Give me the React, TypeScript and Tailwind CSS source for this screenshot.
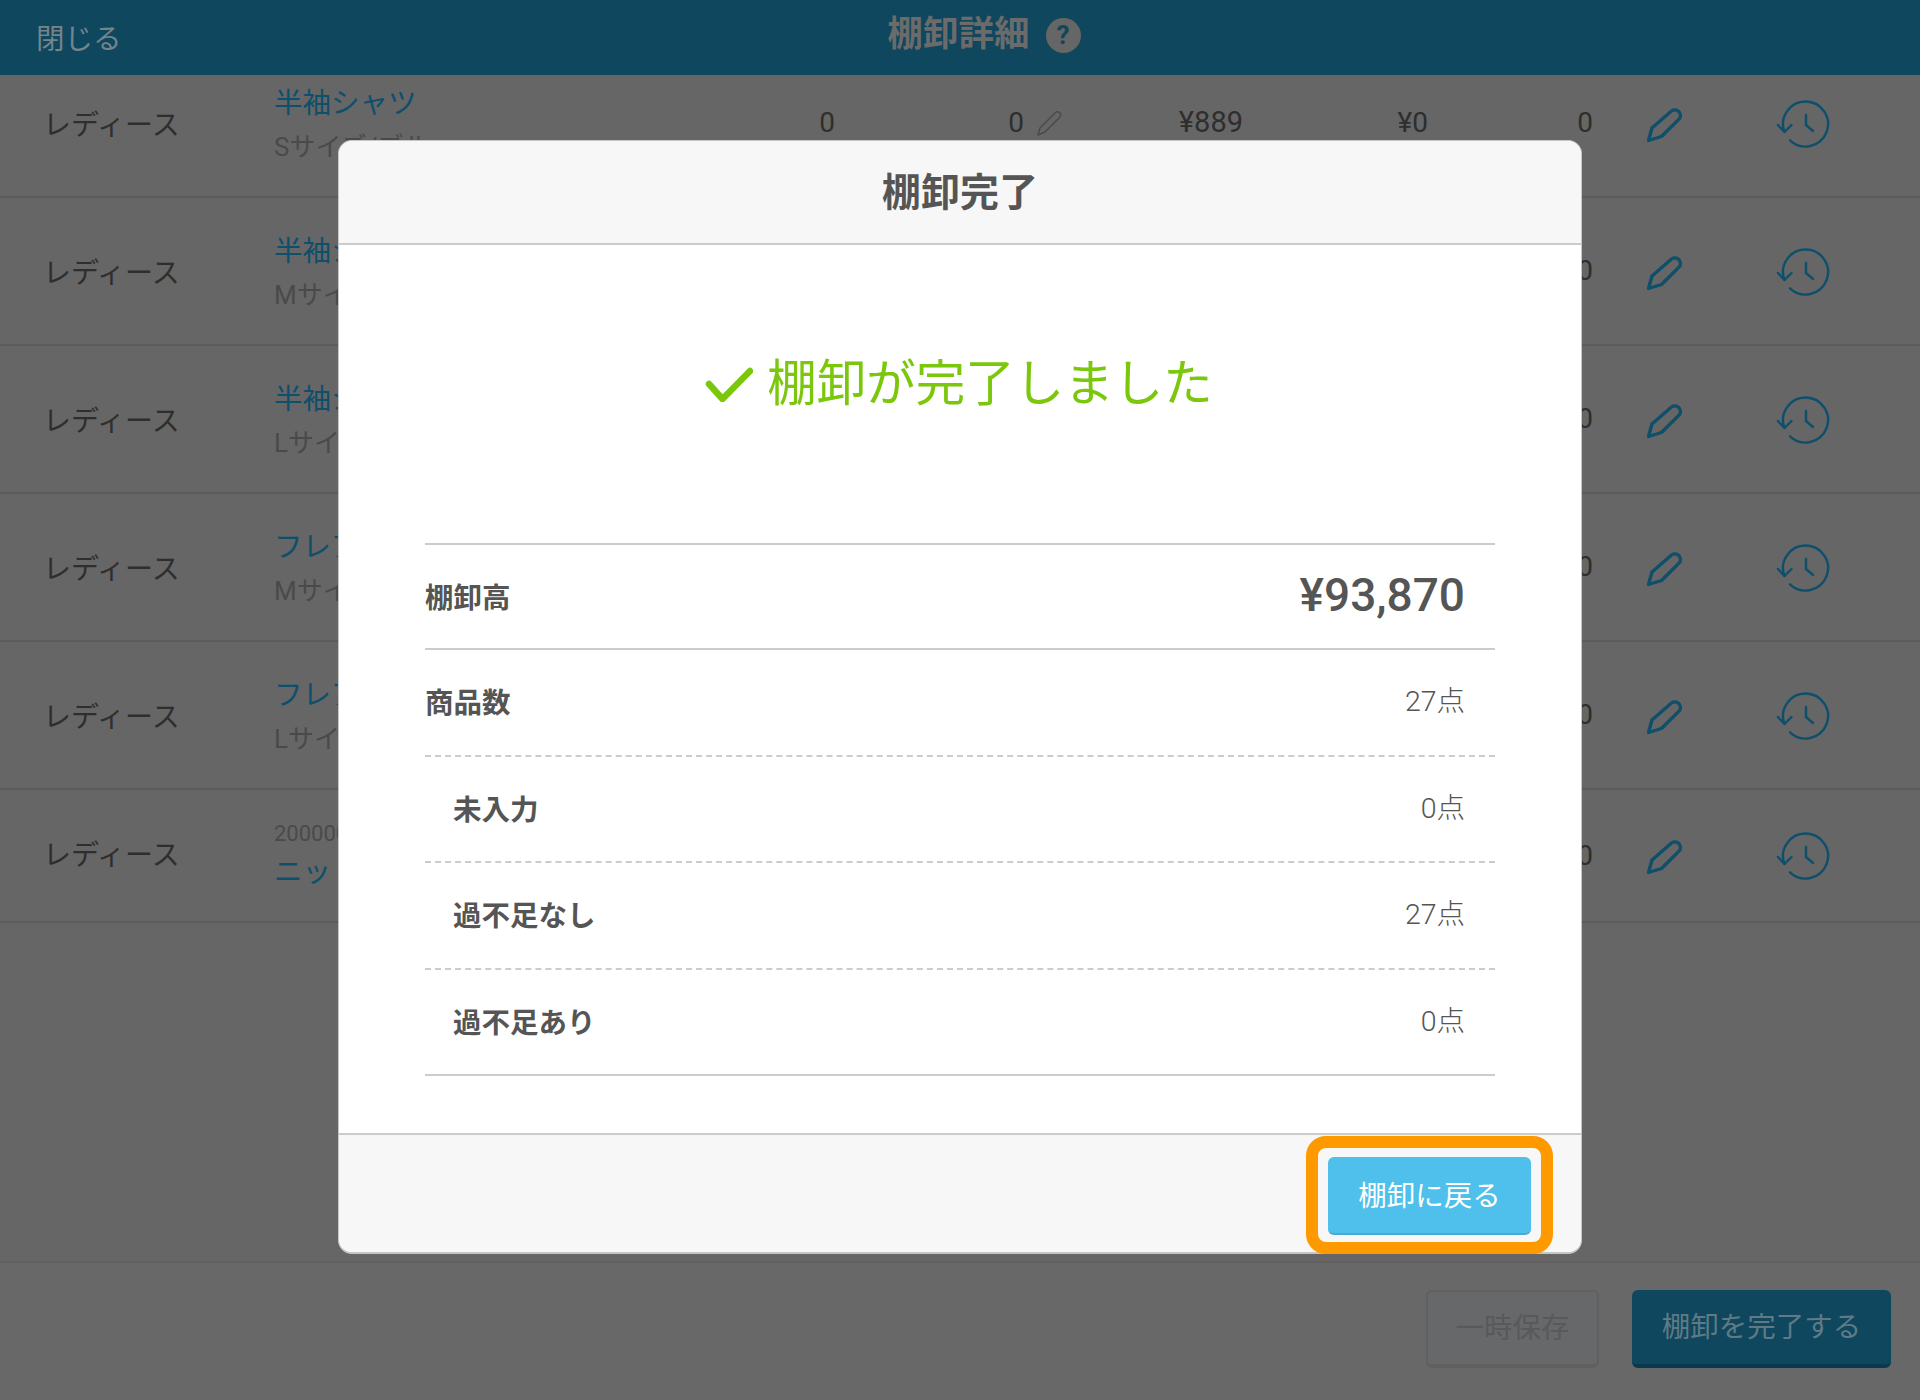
const rows = [
  { name: "半袖シャツ", sub: "Sサイズ/ブルー", first: true },
  { name: "半袖シャツ", sub: "Mサイズ/ブルー" },
  { name: "半袖シャツ", sub: "Lサイズ/ブルー" },
  { name: "フレアスカート", sub: "Mサイズ/ネイビー" },
  { name: "フレアスカート", sub: "Lサイズ/ネイビー" },
];

const summary = [
  { label: "商品数", value: "27点", indent: false, line: "border-dashed" },
  { label: "未入力", value: "0点", indent: true, line: "border-dashed" },
  { label: "過不足なし", value: "27点", indent: true, line: "border-dashed" },
  { label: "過不足あり", value: "0点", indent: true, line: "border-solid" },
];

const PencilIcon = () => (
  <svg width="36" height="36" viewBox="0 0 36 36" fill="none" stroke="#0e4f6c" strokeWidth="3.4" strokeLinejoin="round">
    <path d="M1.5 33.5l3.5-12.5L24.5 4a5.6 5.6 0 0 1 8 7.6L14.5 29.5z" />
  </svg>
);

const HistoryIcon = () => (
  <svg width="54" height="48" viewBox="0 0 54 48" fill="none" stroke="#0e4f6c" strokeWidth="2.4" strokeLinecap="round" strokeLinejoin="round">
    <path d="M8.5 32A22.5 22.5 0 1 1 14 40.3" />
    <path d="M2 25l6.5 7 7-7" />
    <path d="M30 15v10l7 6" />
  </svg>
);

const Row = ({ name, sub, first }: { name: string; sub: string; first?: boolean }) => (
  <div className={`grid h-[148px] grid-cols-[274px_480px_81px_189px_220px_186px_163px_144px_136px] items-center border-b-2 border-[#5c5c5c] text-[28px] text-[#2e2e2e] ${first ? "-mt-[25px]" : ""}`}>
    <div className="pl-[43px] pt-[5px]">レディース</div>
    <div className="pt-[5px]">
      <div className="text-[28.5px] leading-[40px] text-[#0e4f6c]">{name}</div>
      <div className="mt-[3px] text-[26px] leading-[40px] text-[#4a4a4a]">{sub}</div>
    </div>
    <div className="text-right">0</div>
    <div className="text-right">0</div>
    <div className="flex items-center justify-between pl-[12px] pr-[1px] text-[29px]">
      <svg width="28" height="28" viewBox="0 0 28 28" fill="none" stroke="#4a4a4a" strokeWidth="1.5" strokeLinejoin="round">
        <path d="M2 26l2-7L19 4a3 3 0 0 1 5 4L9 23z" />
      </svg>
      <span>¥889</span>
    </div>
    <div className="pr-[2px] text-right">¥0</div>
    <div className="text-right">0</div>
    <div className="flex justify-center pt-[4px]"><PencilIcon /></div>
    <div className="flex justify-center pr-[4px] pt-[2px]"><HistoryIcon /></div>
  </div>
);

export default function App() {
  return (
    <div className="relative flex h-[1400px] w-[1920px] flex-col overflow-hidden bg-[#666666] font-['Roboto','Noto_Sans_CJK_JP',sans-serif]">
      <header className="relative flex h-[75px] shrink-0 items-center bg-[#0e475e] pl-[36px]">
        <span className="mt-[6px] text-[28.5px] text-[#74848b]">閉じる</span>
        <div className="absolute inset-x-0 top-0 flex h-[70px] items-center justify-center gap-[16px] pl-[48px]">
          <span className="text-[35.5px] font-bold text-[#6b6b6b]">棚卸詳細</span>
          <span className="flex h-[35px] w-[35px] items-center justify-center rounded-full bg-[#666666] text-[26px] font-bold text-[#0e475e]">?</span>
        </div>
      </header>

      <main className="flex-1 overflow-hidden">
        {rows.map((r, i) => (
          <Row key={i} name={r.name} sub={r.sub} first={r.first} />
        ))}
        <div className="grid h-[133px] grid-cols-[274px_480px_81px_189px_220px_186px_163px_144px_136px] items-center border-b-2 border-[#5c5c5c] text-[28px] text-[#2e2e2e]">
          <div className="pl-[43px] pt-[1px]">レディース</div>
          <div>
            <div className="text-[22px] leading-[30px] text-[#4a4a4a]">20000000012</div>
            <div className="mt-[4px] text-[28.5px] leading-[40px] text-[#0e4f6c]">ニットカーディガン</div>
          </div>
          <div />
          <div />
          <div />
          <div />
          <div className="text-right">0</div>
          <div className="flex justify-center pt-[3px]"><PencilIcon /></div>
          <div className="flex justify-center pr-[4px] pt-[1px]"><HistoryIcon /></div>
        </div>
      </main>

      <footer className="flex h-[139px] shrink-0 items-start justify-end gap-[33px] border-t-2 border-[#616161] bg-[#686868] pr-[29px] pt-[27px]">
        <button className="h-[78px] w-[173px] rounded-[6px] border-2 border-b-4 border-[#606060] bg-[#67686a] pt-[3px] text-[28.5px] text-[#595959]">一時保存</button>
        <button className="h-[78px] w-[259px] rounded-[6px] border-b-4 border-[#0b3a4e] bg-[#0e475e] pt-[3px] text-[28.5px] text-[#5f7a85]">棚卸を完了する</button>
      </footer>

      {/* モーダル */}
      <div className="absolute inset-0 flex justify-center pt-[140px]">
        <div className="flex h-[1114px] w-[1244px] flex-col rounded-[14px] border border-b-2 border-[#c6c6c6] bg-white text-[#555555]">
          <div className="flex h-[104px] shrink-0 items-center justify-center rounded-t-[14px] border-b-2 border-[#cccccc] bg-[#f7f7f7] pt-[2px] text-[39px] font-bold">
            棚卸完了
          </div>
          <div className="flex-1 px-[86px]">
            <div className="flex h-[298px] items-center justify-center gap-[14px] pb-[20px] pr-[2px] text-[49.5px] font-normal text-[#7ac70c]">
              <svg width="48" height="36" viewBox="0 0 48 36" fill="none" stroke="#7ac70c" strokeWidth="6.5" strokeLinecap="round" strokeLinejoin="round">
                <path d="M4 18l13.5 15L45 5" />
              </svg>
              <span>棚卸が完了しました</span>
            </div>
            <div className="flex h-[107px] items-center justify-between border-y-2 border-[#cccccc] pr-[30px] text-[28.5px] font-bold">
              <span className="mt-[5px]">棚卸高</span>
              <span className="-mt-[3px] text-[46px] font-medium">¥93,870</span>
            </div>
            {summary.map((s) => (
              <div key={s.label} className={`flex h-[106.5px] items-center justify-between border-b-2 border-[#cccccc] pr-[30px] text-[28.5px] ${s.line} ${s.indent ? "pl-[28px]" : ""}`}>
                <span className="mt-[5px] font-bold">{s.label}</span>
                <span className="mt-[1px] font-light">{s.value}</span>
              </div>
            ))}
          </div>
          <div className="flex h-[119px] shrink-0 justify-end rounded-b-[14px] border-t-2 border-[#cccccc] bg-[#f7f7f7] pr-[50px] pt-[22px]">
            <button className="relative h-[78px] w-[203px] rounded-[6px] border-b-2 border-[#46abd4] bg-[#4fbfeb] pt-[4px] text-[28.5px] text-white">
              棚卸に戻る
              <span className="absolute -inset-x-[22px] -inset-y-[21px] rounded-[20px] border-[12px] border-[#ff9900]" />
            </button>
          </div>
        </div>
      </div>
    </div>
  );
}
